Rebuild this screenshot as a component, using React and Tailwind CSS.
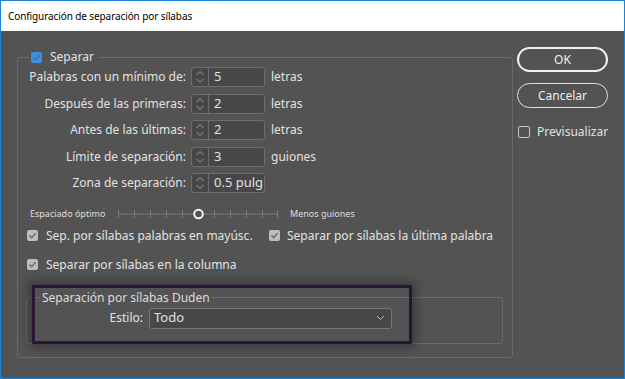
import React from 'react';

const Chevrons = () => (
    <svg width="10" height="16" viewBox="0 0 10 16" fill="none" stroke="#a0a0a0" strokeWidth="1">
        <path d="M1.5 6 L5 2.5 L8.5 6" />
        <path d="M1.5 10 L5 13.5 L8.5 10" />
    </svg>
);

const Box = ({ tone = 'gray' }) => {
    if (tone === 'blue') {
        return (
            <span className="w-[11px] h-[11px] rounded-[2px] bg-[#3b8fe6] flex items-center justify-center shrink-0">
                <svg width="9" height="9" viewBox="0 0 9 9" fill="none" stroke="#5a6b86" strokeWidth="1.6">
                    <path d="M1.5 4.5 L3.7 6.7 L7.6 2.3" />
                </svg>
            </span>
        );
    }
    if (tone === 'empty') {
        return <span className="w-[12px] h-[12px] rounded-[2px] border border-[#c8c8c8] shrink-0" />;
    }
    return (
        <span className="w-[11px] h-[11px] rounded-[2px] bg-[#bdbdbd] flex items-center justify-center shrink-0">
            <svg width="9" height="9" viewBox="0 0 9 9" fill="none" stroke="#6c6c6c" strokeWidth="1.6">
                <path d="M1.5 4.5 L3.7 6.7 L7.6 2.3" />
            </svg>
        </span>
    );
};

const SpinRow = ({ label, value, unit }) => (
    <div className="flex items-center h-[20px]">
        <span className="w-[168px] text-right whitespace-nowrap">{label}</span>
        <div className="ml-[5px] w-[74px] h-full flex border border-[#6e6e6e] rounded-[3px] bg-[#474747]">
            <div className="w-[17px] border-r border-[#6e6e6e] flex items-center justify-center">
                <Chevrons />
            </div>
            <span className="pl-[5px] flex items-center text-[13px]">{value}</span>
        </div>
        {unit && <span className="ml-[6px]">{unit}</span>}
    </div>
);

const Slider = () => {
    const ticks = [118, 134, 150, 166, 182, 214, 230, 246, 262, 277];
    return (
        <svg width="162" height="12" viewBox="117 0 162 12" className="shrink-0">
            <line x1="118" y1="6" x2="277" y2="6" stroke="#7c7c7c" strokeWidth="1" />
            {ticks.map((x) => (
                <line key={x} x1={x + 0.5} y1="2" x2={x + 0.5} y2="10" stroke="#7c7c7c" strokeWidth="1" />
            ))}
            <circle cx="198.5" cy="6" r="4.3" fill="#535353" stroke="#f2f2f2" strokeWidth="2" />
        </svg>
    );
};

export default function App() {
    return (
        <div className="relative w-[625px] h-[379px] border border-[#1883d7] bg-[#535353] flex flex-col text-[#e2e2e2] text-[12px] font-['Noto_Sans',sans-serif] overflow-hidden">
            <div className="h-[30px] bg-white flex items-center pl-[7px] text-[10px] tracking-[-0.1px] text-black shrink-0">
                Configuración de separación por sílabas
            </div>

            <div className="flex flex-1">
                <fieldset className="ml-[16px] mt-[19px] w-[496px] h-[308px] border border-[#6a6a6a] rounded-[3px] flex flex-col">
                    <legend className="ml-[11px] px-[2px] h-[14px] flex items-center gap-[8px] leading-[14px]">
                        <Box tone="blue" />
                        <span className="pr-[2px]">Separar</span>
                    </legend>

                    <div className="mt-[3px] flex flex-col gap-[6.5px]">
                        <SpinRow label="Palabras con un mínimo de:" value="5" unit="letras" />
                        <SpinRow label="Después de las primeras:" value="2" unit="letras" />
                        <SpinRow label="Antes de las últimas:" value="2" unit="letras" />
                        <SpinRow label="Límite de separación:" value="3" unit="guiones" />
                        <SpinRow label="Zona de separación:" value="0.5 pulg" />
                    </div>

                    <div className="mt-[14.5px] h-[12px] flex items-center text-[9px] text-[#dedede]">
                        <span className="ml-[12px] w-[87px] whitespace-nowrap">Espaciado óptimo</span>
                        <Slider />
                        <span className="ml-[11px] whitespace-nowrap">Menos guiones</span>
                    </div>

                    <div className="mt-[8px] h-[16px] flex items-center">
                        <span className="ml-[9px] flex items-center gap-[8px] w-[242px]">
                            <Box />
                            <span className="whitespace-nowrap">Sep. por sílabas palabras en mayúsc.</span>
                        </span>
                        <span className="flex items-center gap-[7px]">
                            <Box />
                            <span className="whitespace-nowrap">Separar por sílabas la última palabra</span>
                        </span>
                    </div>

                    <div className="mt-[13px] h-[16px] flex items-center ml-[9px] gap-[8px]">
                        <Box />
                        <span className="whitespace-nowrap">Separar por sílabas en la columna</span>
                    </div>

                    <fieldset className="mt-[17px] ml-[8px] w-[477px] h-[54px] border border-[#6a6a6a] rounded-[3px]">
                        <legend className="ml-[13px] px-[2px] h-[16px] leading-[16px] text-[#dcdcdc]">
                            Separación por sílabas Duden
                        </legend>
                        <div className="mt-[2px] flex items-center h-[21px]">
                            <span className="w-[116px] text-right">Estilo:</span>
                            <div className="ml-[6px] w-[243px] h-full flex items-center justify-between border border-[#767676] rounded-[3px] bg-[#474747] pl-[4px] pr-[6px]">
                                <span className="text-[13px]">Todo</span>
                                <svg width="9" height="6" viewBox="0 0 9 6" fill="none" stroke="#bdbdbd" strokeWidth="1">
                                    <path d="M1 1 L4.5 4.5 L8 1" />
                                </svg>
                            </div>
                        </div>
                    </fieldset>
                </fieldset>

                <div className="ml-[4px] mt-[16px] flex flex-col">
                    <button className="w-[91px] h-[25px] rounded-full border-2 border-[#f0f0f0] flex items-center justify-center text-[#f0f0f0]">
                        OK
                    </button>
                    <button className="mt-[11px] w-[91px] h-[25px] rounded-full border border-[#e0e0e0] flex items-center justify-center text-[#eeeeee]">
                        Cancelar
                    </button>
                    <div className="mt-[15px] ml-[1px] flex items-center gap-[7px]">
                        <Box tone="empty" />
                        <span>Previsualizar</span>
                    </div>
                </div>
            </div>

            <div className="absolute left-[31px] top-[284px] w-[380px] h-[59px] border-[3px] border-[#2a1534] shadow-[0_0_10px_3px_rgba(0,0,0,0.35)] pointer-events-none" />
        </div>
    );
}
